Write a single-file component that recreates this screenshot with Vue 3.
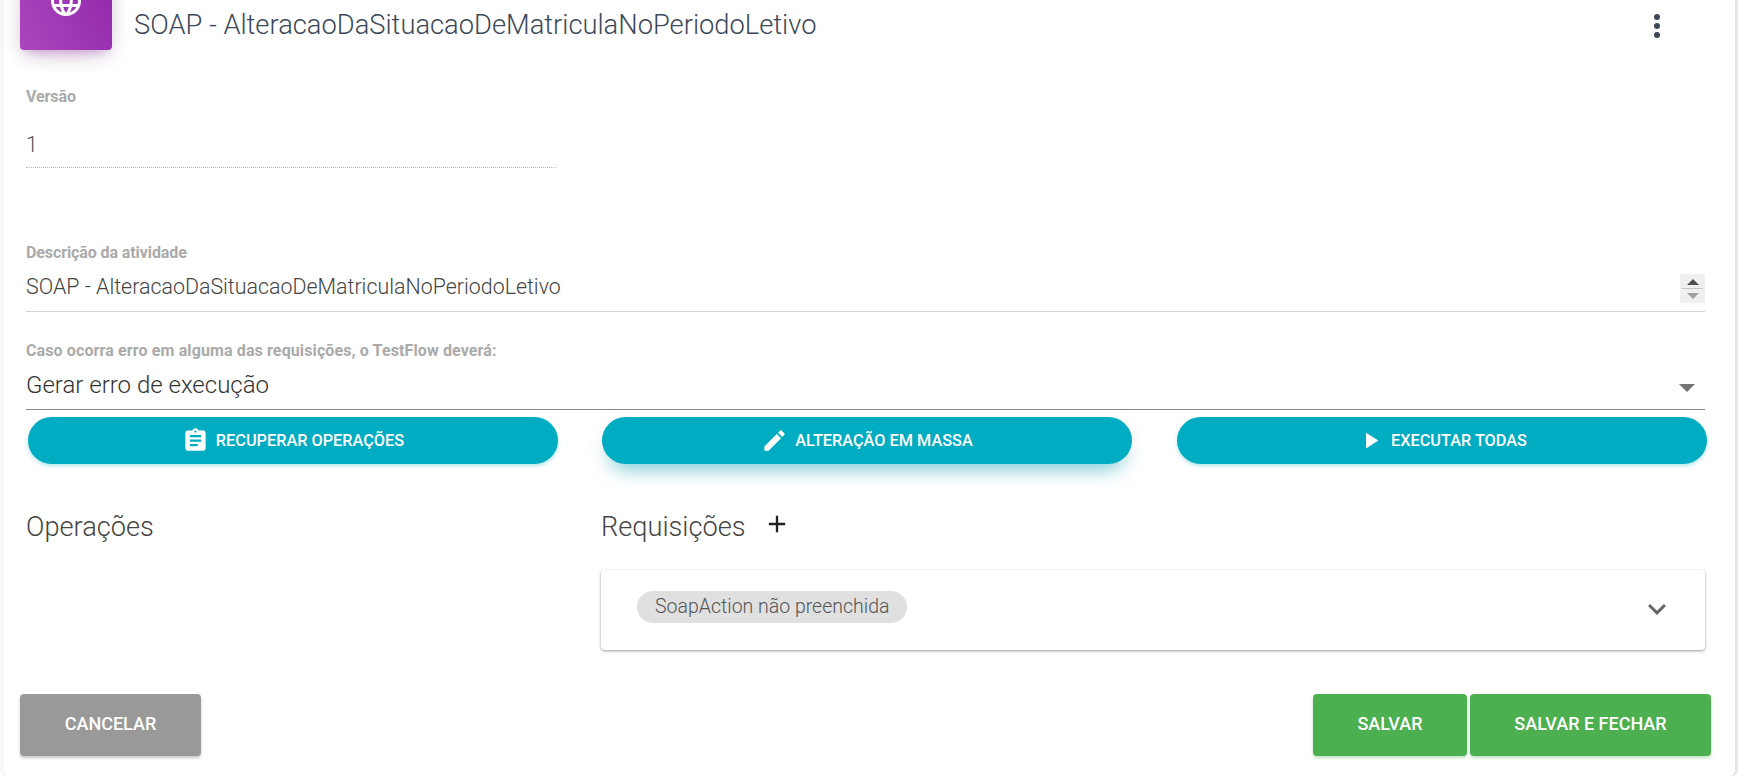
<template>
  <div class="page">
    <div class="card">
      <header class="card-header">
        <div class="card-icon">
          <svg viewBox="0 0 24 24" width="36" height="36"><path :d="icons.language" fill="#fff" /></svg>
        </div>
        <h4 class="card-title">SOAP - AlteracaoDaSituacaoDeMatriculaNoPeriodoLetivo</h4>
        <button class="menu-button" aria-label="Menu">
          <span class="dot"></span>
          <span class="dot"></span>
          <span class="dot"></span>
        </button>
      </header>

      <div class="form">
        <div class="version-field">
          <label class="field-label">Versão</label>
          <div class="version-value">1</div>
        </div>

        <div class="description-field">
          <label class="field-label">Descrição da atividade</label>
          <div class="text-row">
            <span class="field-value">SOAP - AlteracaoDaSituacaoDeMatriculaNoPeriodoLetivo</span>
            <div class="spinner">
              <span class="spin-up"></span>
              <span class="spin-line"></span>
              <span class="spin-down"></span>
            </div>
          </div>
        </div>

        <div class="error-field">
          <label class="field-label">Caso ocorra erro em alguma das requisições, o TestFlow deverá:</label>
          <div class="select-row">
            <span class="select-value">Gerar erro de execução</span>
            <span class="select-arrow"></span>
          </div>
        </div>

        <div class="actions">
          <button v-for="action in actions" :key="action.label" class="action-button" :class="{ raised: action.raised }">
            <svg viewBox="0 0 24 24" width="27" height="27"><path :d="action.icon" fill="#fff" /></svg>
            <span>{{ action.label }}</span>
          </button>
        </div>

        <div class="columns">
          <h3 class="section-title">Operações</h3>
          <div class="requests">
            <div class="requests-head">
              <h3 class="section-title">Requisições</h3>
              <svg viewBox="0 0 24 24" width="28" height="28"><path :d="icons.add" fill="#222" /></svg>
            </div>
            <div class="request-card">
              <span class="chip">SoapAction não preenchida</span>
              <svg viewBox="0 0 24 24" width="36" height="36"><path :d="icons.expand" fill="#666" /></svg>
            </div>
          </div>
        </div>
      </div>

      <footer class="card-footer">
        <button class="footer-button cancel">CANCELAR</button>
        <div class="save-group">
          <button class="footer-button save">SALVAR</button>
          <button class="footer-button save save-close">SALVAR E FECHAR</button>
        </div>
      </footer>
    </div>
  </div>
</template>

<script setup>
const icons = {
  language: 'M11.99 2C6.47 2 2 6.48 2 12s4.47 10 9.99 10C17.52 22 22 17.52 22 12S17.52 2 11.99 2zm6.93 6h-2.95c-.32-1.25-.78-2.45-1.38-3.56 1.84.63 3.37 1.91 4.33 3.56zM12 4.04c.83 1.2 1.48 2.53 1.91 3.96h-3.82c.43-1.43 1.08-2.76 1.91-3.96zM4.26 14C4.1 13.36 4 12.69 4 12s.1-1.36.26-2h3.38c-.08.66-.14 1.32-.14 2 0 .68.06 1.34.14 2H4.26zm.82 2h2.95c.32 1.25.78 2.45 1.38 3.56-1.84-.63-3.37-1.9-4.33-3.56zm2.95-8H5.08c.96-1.66 2.49-2.93 4.33-3.56C8.81 5.55 8.35 6.75 8.03 8zM12 19.96c-.83-1.2-1.48-2.53-1.91-3.96h3.82c-.43 1.43-1.08 2.76-1.91 3.96zM14.34 14H9.66c-.09-.66-.16-1.32-.16-2 0-.68.07-1.35.16-2h4.68c.09.65.16 1.32.16 2 0 .68-.07 1.34-.16 2zm.25 5.56c.6-1.11 1.06-2.31 1.38-3.56h2.95c-.96 1.65-2.49 2.93-4.33 3.56zM16.36 14c.08-.66.14-1.32.14-2 0-.68-.06-1.34-.14-2h3.38c.16.64.26 1.31.26 2s-.1 1.36-.26 2h-3.38z',
  add: 'M19 13h-6v6h-2v-6H5v-2h6V5h2v6h6v2z',
  expand: 'M16.59 8.59L12 13.17 7.41 8.59 6 10l6 6 6-6z'
}

const actions = [
  {
    label: 'RECUPERAR OPERAÇÕES',
    icon: 'M19 3h-4.18C14.4 1.84 13.3 1 12 1c-1.3 0-2.4.84-2.82 2H5c-1.1 0-2 .9-2 2v14c0 1.1.9 2 2 2h14c1.1 0 2-.9 2-2V5c0-1.1-.9-2-2-2zm-7 0c.55 0 1 .45 1 1s-.45 1-1 1-1-.45-1-1 .45-1 1-1zm2 14H7v-2h7v2zm3-4H7v-2h10v2zm0-4H7V7h10v2z'
  },
  {
    label: 'ALTERAÇÃO EM MASSA',
    raised: true,
    icon: 'M3 17.25V21h3.75L17.81 9.94l-3.75-3.75L3 17.25zM20.71 7.04c.39-.39.39-1.02 0-1.41l-2.34-2.34c-.39-.39-1.02-.39-1.41 0l-1.83 1.83 3.75 3.75 1.83-1.83z'
  },
  { label: 'EXECUTAR TODAS', icon: 'M8 5v14l11-7z' }
]
</script>

<style>
html, body {
  margin: 0;
  background: #fff;
}
</style>

<style scoped>
.page {
  height: 778px;
  overflow: hidden;
  font-family: Roboto, "Liberation Sans", sans-serif;
}

.card {
  box-sizing: border-box;
  width: 1731px;
  height: 776px;
  margin-left: 4px;
  padding: 0 30px 0 22px;
  background: #fff;
  border-radius: 0 0 6px 6px;
  box-shadow: 3px 0 0 #e6e6e6, -4px 0 0 #f7f7f7;
}

.card-header {
  display: flex;
  align-items: flex-start;
  height: 50px;
}

.card-icon {
  display: flex;
  flex-shrink: 0;
  align-items: center;
  justify-content: center;
  width: 92px;
  height: 98px;
  margin: -48px 22px 0 -6px;
  border-radius: 4px;
  background: linear-gradient(60deg, #ab47bc, #8e24aa);
  box-shadow: 0 12px 20px -10px rgba(156, 39, 176, 0.28), 0 4px 20px 0 rgba(0, 0, 0, 0.12), 0 7px 8px -5px rgba(156, 39, 176, 0.2);
}

.card-title {
  flex: 1;
  margin: 9px 0 0;
  color: #3c4858;
  font-size: 27.3px;
  font-weight: 300;
  line-height: 32px;
}

.menu-button {
  display: flex;
  flex-direction: column;
  gap: 3px;
  margin: 14px 45px 0 0;
  padding: 0;
  border: 0;
  background: none;
}

.dot {
  width: 6px;
  height: 6px;
  border-radius: 50%;
  background: #3c4858;
}

.field-label {
  display: block;
  color: #aaa;
  font-size: 16px;
  font-weight: 700;
  line-height: 20px;
}

.version-field {
  width: 530px;
  padding-top: 37px;
}

.version-field .field-label,
.description-field .field-label {
  letter-spacing: -0.1px;
}

.version-value {
  height: 35px;
  margin-top: 25px;
  border-bottom: 1px dotted #bbb;
  color: #4a525e;
  font-size: 21.4px;
  font-weight: 300;
  line-height: 26px;
}

.description-field {
  margin-top: 75px;
}

.text-row {
  display: flex;
  align-items: flex-start;
  justify-content: space-between;
  height: 37px;
  margin-top: 11px;
  border-bottom: 1px solid #d2d2d2;
}

.field-value {
  color: #444;
  font-size: 21.4px;
  font-weight: 300;
  line-height: 26px;
}

.spinner {
  display: flex;
  flex-direction: column;
  align-items: center;
  box-sizing: border-box;
  width: 25px;
  height: 29px;
  padding-top: 5px;
  background: #f0f0f0;
}

.spin-up,
.spin-down {
  width: 0;
  height: 0;
  border-right: 6px solid transparent;
  border-left: 6px solid transparent;
}

.spin-up {
  border-bottom: 6px solid #505050;
}

.spin-down {
  border-top: 6px solid #a0a0a0;
}

.spin-line {
  width: 21px;
  height: 1px;
  margin: 3px 0 4px;
  background: #c4c4c4;
}

.error-field {
  margin-top: 29px;
}

.error-field .field-label {
  letter-spacing: 0.12px;
}

.select-row {
  display: flex;
  align-items: flex-start;
  justify-content: space-between;
  height: 45px;
  margin-top: 3px;
  padding-right: 10px;
  border-bottom: 1px solid #888;
}

.select-value {
  color: #333;
  font-size: 24px;
  font-weight: 300;
  line-height: 43px;
}

.select-arrow {
  width: 0;
  height: 0;
  margin-top: 20px;
  border-top: 8px solid #757575;
  border-right: 8px solid transparent;
  border-left: 8px solid transparent;
}

.actions {
  display: grid;
  grid-template-columns: 530px 530px 531px;
  gap: 44px;
  margin: 7px 0 0 2px;
}

.action-button {
  display: flex;
  align-items: center;
  justify-content: center;
  gap: 7px;
  height: 47px;
  padding: 0;
  border: 0;
  border-radius: 24px;
  background: #00acc1;
  box-shadow: 0 2px 4px rgba(0, 172, 193, 0.3);
  color: #fff;
  font-family: inherit;
  font-size: 16.3px;
  font-weight: 500;
}

.action-button:last-child {
  margin-left: 1px;
}

.action-button.raised {
  box-shadow: 0 14px 20px -10px rgba(0, 172, 193, 0.55), 0 4px 20px rgba(0, 0, 0, 0.06);
}

.columns {
  display: grid;
  grid-template-columns: 530px 1fr;
  gap: 45px;
  margin-top: 45px;
}

.section-title {
  margin: 0;
  color: #444;
  font-size: 27.2px;
  font-weight: 300;
  line-height: 36px;
}

.requests-head {
  display: flex;
  align-items: center;
  gap: 17px;
  height: 36px;
}

.requests-head svg {
  margin-top: -6px;
}

.request-card {
  display: flex;
  align-items: flex-start;
  justify-content: space-between;
  box-sizing: border-box;
  height: 80px;
  margin-top: 25px;
  padding: 21px 30px 0 36px;
  border-radius: 4px;
  background: #fff;
  box-shadow: 0 1px 3px rgba(0, 0, 0, 0.4);
}

.chip {
  padding: 0 18px;
  border-radius: 16px;
  background: #e0e0e0;
  color: #555;
  font-size: 19.5px;
  font-weight: 300;
  line-height: 31px;
  height: 32px;
}

.request-card svg {
  margin-top: 0;
}

.card-footer {
  display: flex;
  justify-content: space-between;
  margin: 44px -6px 0 -6px;
}

.save-group {
  display: flex;
  gap: 3px;
}

.footer-button {
  height: 62px;
  padding: 0 0 4px;
  border: 0;
  border-radius: 4px;
  color: #fff;
  font-family: inherit;
  font-size: 18px;
  font-weight: 500;
}

.cancel {
  width: 181px;
  background: #999;
  box-shadow: 0 2px 3px rgba(0, 0, 0, 0.22);
}

.save {
  width: 154px;
  background: #4caf50;
  box-shadow: 0 2px 3px rgba(76, 175, 80, 0.35);
}

.save-close {
  width: 241px;
}
</style>
